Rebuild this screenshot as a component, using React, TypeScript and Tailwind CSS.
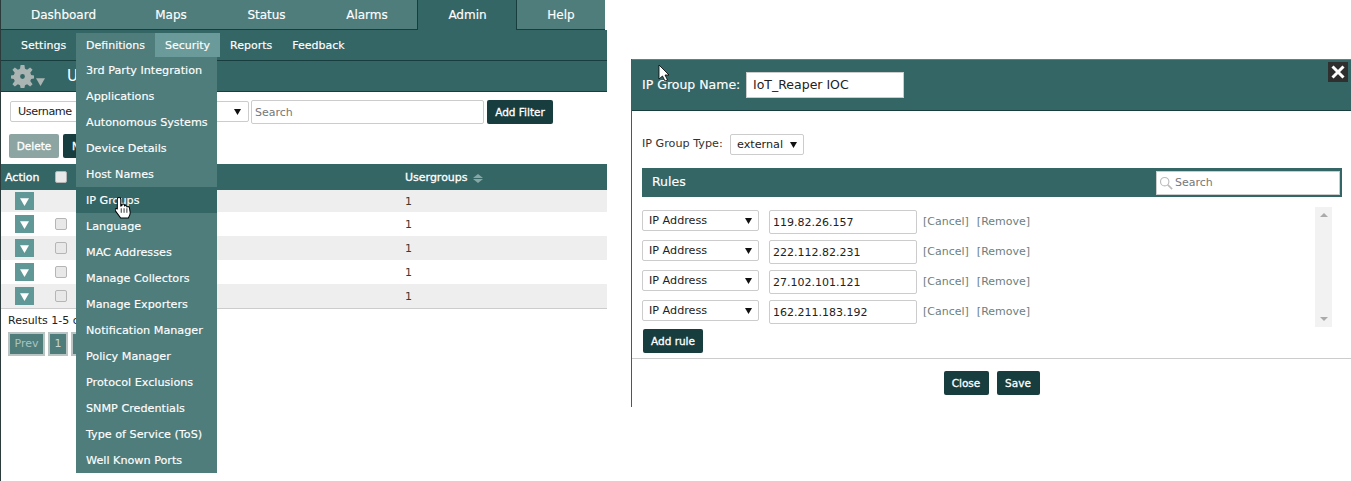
import React from 'react';

const font = "[font-family:Verdana,'DejaVu_Sans',sans-serif]";
const semi = '[-webkit-text-stroke:0.3px_white]';
const soft = '[-webkit-text-stroke:0.15px_white]';

const tabs = ['Dashboard', 'Maps', 'Status', 'Alarms', 'Admin', 'Help'];
const tabWidths = ['w-[125px]', 'w-[90px]', 'w-[101px]', 'w-[100px]', 'w-[100px]', 'w-[88px]'];
const menu = [
  '3rd Party Integration',
  'Applications',
  'Autonomous Systems',
  'Device Details',
  'Host Names',
  'IP Groups',
  'Language',
  'MAC Addresses',
  'Manage Collectors',
  'Manage Exporters',
  'Notification Manager',
  'Policy Manager',
  'Protocol Exclusions',
  'SNMP Credentials',
  'Type of Service (ToS)',
  'Well Known Ports',
];
const rules = ['119.82.26.157', '222.112.82.231', '27.102.101.121', '162.211.183.192'];

function Caret({ className }: { className: string }) {
  return (
    <svg viewBox="0 0 8 8" className={className}>
      <path d="M0 1h8L4 8z" fill="currentColor" />
    </svg>
  );
}

function Gear() {
  return (
    <svg viewBox="0 0 24 24" className="w-[23px] h-[23px] text-[#aab4b2]">
      <path
        fill="currentColor"
        fillRule="evenodd"
        d="M10 0h4l.6 4 2.2.9L20 2.500 22.500 5l-2.400 3.200.9 2.200 3 .6v3l-3 .6-.9 2.200 2.400 3.200-2.500 2.500-3.200-2.400-2.200.9-.6 3h-4l-.6-3-2.200-.9L4 22.500 1.500 20l2.400-3.200-.9-2.200-3-.6v-3l3-.6.9-2.200L1.500 5 4 2.500l3.200 2.400L9.400 4zM12 9.500a2.500 2.500 0 1 0 0 5 2.500 2.500 0 0 0 0-5z"
      />
    </svg>
  );
}

function Pointer({ className }: { className: string }) {
  return (
    <svg viewBox="1.500 1 15 19.500" className={className}>
      <path
        d="M5 1.500c1 0 1.600.7 1.600 1.700V9l1-.3V7.600c1-.7 2-.3 2.200.6l.1.7c1-.6 2-.2 2.200.8 1-.4 2 0 2.200 1l.6 4c.2 2-.7 3.500-1.600 5H6.500L2 13.500c-.8-1-.5-2 .5-2.300l1 .3V3.200C3.500 2.200 4 1.500 5 1.500z"
        fill="#fff"
        stroke="#000"
        strokeWidth="0.900"
      />
      <path d="M7 11v4M9.500 11v4M12 11v4" stroke="#000" strokeWidth="0.700" />
    </svg>
  );
}

function TableRow({ striped, check = true, first = false }: { striped: boolean; check?: boolean; first?: boolean }) {
  return (
    <div className={`${first ? 'h-[22px]' : 'h-[24px]'} flex items-center ${striped ? 'bg-[#eeeeee]' : 'bg-white'}`}>
      <div className="ml-[14px] w-[19px] h-[18px] bg-[#5f9896] flex items-center justify-center">
        <Caret className="w-[9px] h-[9px] text-white" />
      </div>
      <div className="w-[21px]" />
      {check ? <div className="w-[12px] h-[12px] rounded-[2px] border border-[#b5b5b5] bg-[#e8e8e8]" /> : <div className="w-[12px]" />}
      <div className="ml-[338px] pt-[2px] text-[11px] text-[#3f3a30]">1</div>
    </div>
  );
}

function Select({ label, className, labelClass = '' }: { label: string; className: string; labelClass?: string }) {
  return (
    <div className={`flex items-center justify-between bg-white border border-[#ccc] rounded-[2px] ${className}`}>
      <span className={`pt-[2px] text-[11.200px] text-[#222] ${labelClass}`}>{label}</span>
      <Caret className="w-[7px] h-[7px] text-[#111]" />
    </div>
  );
}

function DarkButton({ children, className }: { children: React.ReactNode; className: string }) {
  return (
    <button className={`bg-[#173d3f] pt-[2px] text-white text-[10.500px] rounded-[2px] ${semi} ${className}`}>{children}</button>
  );
}

function AdminPanel() {
  return (
    <div className="relative w-[607px] h-[481px] shrink-0 border-l border-[#2b3a3a]">
      <div className="h-[30px] flex bg-[#4f7d7c] w-[604px]">
        {tabs.map((t, i) => {
          const active = t === 'Admin';
          return (
            <div
              key={t}
              className={`${tabWidths[i]} flex items-center justify-center text-[12px] text-white ${soft} ${
                active ? 'bg-[#356666] border-x border-[#173d3f] pl-[1px]' : 'border-b border-[#173d3f]'
              }`}
            >
              {t}
            </div>
          );
        })}
      </div>
      <div className={`h-[31px] bg-[#356666] border-b border-[#173d3f] flex items-start pt-[3px] pl-[10px] text-[11px] text-white ${soft}`}>
        <div className="w-[65px] h-[24px] pl-[10px] pt-[2px] flex items-center">Settings</div>
        <div className="w-[79px] h-[28px] pb-[2px] pl-[10px] flex items-center bg-[#4f7d7c]">Definitions</div>
        <div className="w-[65px] h-[24px] pt-[2px] flex items-center justify-center bg-[#6a9b9a]">Security</div>
        <div className="h-[24px] px-[10px] pt-[2px] flex items-center">Reports</div>
        <div className="h-[24px] px-[10px] pt-[2px] flex items-center">Feedback</div>
      </div>
      <div className="h-[31px] bg-[#356666] border-b border-[#173d3f] flex items-center pl-[10px]">
        <Gear />
        <Caret className="w-[9px] h-[9px] text-[#aab4b2] mt-[10px] ml-[2px]" />
        <span className="ml-[22px] text-[15px] text-white">Users</span>
      </div>
      <div className="flex items-start h-[42px] pl-[9px] pt-[8px]">
        <Select label="Username" labelClass="tracking-[-0.4px]" className="mt-[1px] w-[239px] h-[21px] px-[7px]" />
        <div className="ml-[2px] w-[233px] h-[24px] border border-[#ccc] rounded-[2px] flex items-center px-[3px] pt-[2px] text-[11px] text-[#777]">Search</div>
        <DarkButton className="ml-[3px] w-[66px] h-[24px]">Add Filter</DarkButton>
      </div>
      <div className="flex gap-[4px] pl-[8px] h-[24px]">
        <button className={`w-[50px] h-[24px] pt-[2px] bg-[#8ca5a3] text-white text-[10.500px] rounded-[2px] ${semi}`}>Delete</button>
        <DarkButton className="w-[60px] h-[24px] text-left pl-[9px]">New</DarkButton>
      </div>
      <div className={`mt-[6px] h-[26px] bg-[#356666] flex items-center text-[11px] text-white ${semi}`}>
        <span className="pl-[4px] pt-[2px] w-[54px]">Action</span>
        <div className="w-[12px] h-[12px] rounded-[2px] border border-[#b5b5b5] bg-[#e8e8e8]" />
        <span className="ml-[338px] pt-[2px] flex items-center gap-[5px]">
          Usergroups
          <span className="flex flex-col gap-[1px]">
            <span className="w-0 h-0 border-x-[5px] border-x-transparent border-b-[4px] border-b-[#86a7a5]" />
            <span className="w-0 h-0 border-x-[5px] border-x-transparent border-t-[4px] border-t-[#86a7a5]" />
          </span>
        </span>
      </div>
      <TableRow striped check={false} first />
      <TableRow striped={false} />
      <TableRow striped />
      <TableRow striped={false} />
      <TableRow striped />
      <div className="h-[24px] border-t border-[#ccc] pl-[7px] pt-[4px] text-[11px] text-[#222]">Results 1-5 of 5</div>
      <div className="flex gap-[3px] pl-[7px]">
        <div className="w-[37px] h-[24px] bg-[#4f7d7c] border-2 border-[#b9c4c3] text-[#a8c4c2] text-[11px] flex items-center justify-center">Prev</div>
        <div className="w-[20px] h-[24px] bg-[#4f7d7c] border-2 border-[#b9c4c3] text-[#c5d6d5] text-[11px] flex items-center justify-center">1</div>
        <div className="w-[20px] h-[24px] bg-[#4f7d7c] border-2 border-[#b9c4c3]" />
      </div>

      {/* dropdown */}
      <div className="absolute left-[75px] top-[57px] w-[141px] bg-[#4f7d7c]">
        {menu.map((m) => (
          <div
            key={m}
            className={`h-[26px] pl-[10px] pt-[3px] flex items-center text-[11.200px] text-white ${soft} ${m === 'IP Groups' ? 'bg-[#356666]' : ''}`}
          >
            {m}
          </div>
        ))}
      </div>
      <Pointer className="absolute left-[114px] top-[197px] w-[17px] h-[22px]" />
    </div>
  );
}

function RuleRow({ ip }: { ip: string }) {
  return (
    <div className="flex items-start h-[30px]">
      <Select label="IP Address" className="w-[117px] h-[21px] px-[6px]" />
      <div className="ml-[10px] w-[148px] h-[24px] border border-[#ccc] rounded-[2px] flex items-center pl-[3px] pt-[2px] text-[11px] text-[#222]">{ip}</div>
      <span className="ml-[6px] text-[11px] leading-[23px] text-[#6b7f7e]">[Cancel]</span>
      <span className="ml-[8px] text-[11px] leading-[23px] text-[#6b7f7e]">[Remove]</span>
    </div>
  );
}

function GroupDialog() {
  return (
    <div className="relative ml-[24px] mt-[59px] w-[720px] h-[348px] border-l border-[#555]">
      <div className="h-[52px] bg-[#356666] border-t border-[#777] border-b border-b-[#173d3f] flex items-center pl-[10px]">
        <span className={`w-[104px] text-[12.500px] text-white ${soft}`}>IP Group Name:</span>
        <div className="w-[158px] h-[26px] bg-white border border-[#ccc] flex items-center pl-[6px] text-[12.500px] text-[#222]">IoT_Reaper IOC</div>
      </div>
      <div className="h-[57px] pl-[10px] pt-[23px] flex items-start">
        <span className="w-[88px] text-[11.200px] text-[#333] mt-[2px]">IP Group Type:</span>
        <Select label="external" className="w-[74px] h-[21px] px-[6px]" />
      </div>
      <div className="ml-[10px] w-[700px] h-[29px] bg-[#356666] flex items-center justify-between pl-[10px] pr-[2px]">
        <span className={`text-[12.500px] text-white ${soft}`}>Rules</span>
        <div className="w-[184px] h-[24px] bg-white border border-[#ccc] flex items-center pl-[2px] gap-[2px] text-[11px] text-[#777]">
          <svg viewBox="0 0 16 16" className="w-[14px] h-[14px] text-[#bbb]" fill="none" stroke="currentColor" strokeWidth="1.300">
            <circle cx="6.500" cy="6.500" r="4.800" />
            <path d="M10 10l5 5" strokeWidth="2" />
          </svg>
          <span className="pt-[2px]">Search</span>
        </div>
      </div>
      <div className="relative h-[161px] pl-[10px] pt-[13px]">
        {rules.map((ip) => (
          <RuleRow key={ip} ip={ip} />
        ))}
        <DarkButton className="block -mt-[1px] ml-[1px] w-[60px] h-[24px]">Add rule</DarkButton>
        <div className="absolute left-[683px] top-[10px] w-[17px] h-[120px] bg-[#f2f2f2] flex flex-col items-center justify-between py-[6px]">
          <span className="w-0 h-0 border-x-[4px] border-x-transparent border-b-[4px] border-b-[#aaa]" />
          <span className="w-0 h-0 border-x-[4px] border-x-transparent border-t-[4px] border-t-[#aaa]" />
        </div>
      </div>
      <div className="border-t border-[#ccc] h-[48px] flex justify-center items-start pt-[12px] gap-[8px]">
        <DarkButton className="w-[45px] h-[24px]">Close</DarkButton>
        <DarkButton className="w-[43px] h-[24px]">Save</DarkButton>
      </div>
      <button className="absolute right-[3px] top-[3px] w-[20px] h-[20px] bg-[#2f2f2f] flex items-center justify-center">
        <svg viewBox="0 0 14 14" className="w-[14px] h-[14px] text-white" fill="none" stroke="currentColor" strokeWidth="3">
          <path d="M1.500 1.500l11 11M12.500 1.500l-11 11" />
        </svg>
      </button>
      <svg viewBox="0 0 12 18" className="absolute left-[26px] top-[5px] w-[12px] h-[18px]">
        <path d="M1 1v14l3.500-3 2.500 5 2.500-1-2.500-5H11z" fill="#fff" stroke="#000" strokeWidth="0.800" />
      </svg>
    </div>
  );
}

export default function App() {
  return (
    <div className={`w-[1351px] h-[481px] overflow-hidden bg-white flex ${font}`}>
      <AdminPanel />
      <GroupDialog />
    </div>
  );
}
